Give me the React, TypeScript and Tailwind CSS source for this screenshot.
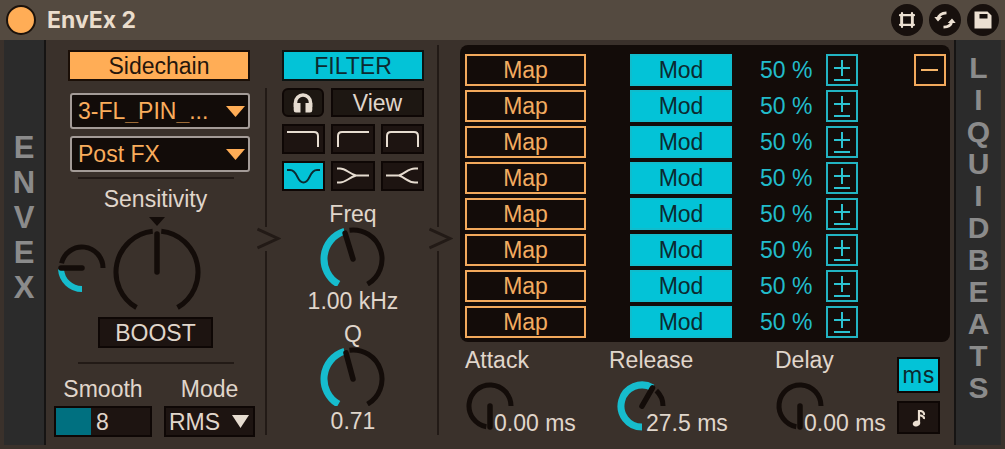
import React, { useState } from "react";

const MAP_ROWS = [1, 2, 3, 4, 5, 6, 7, 8];

interface arcTypes {
  from: number;
  to: number;
  color: string;
  width: number;
}

interface knobTypes {
  label: string;
  width: number;
  height: number;
  cx: number;
  cy: number;
  radius: number;
  needle: number;
  needleLength: number;
  arcs: arcTypes[];
  children?: React.ReactNode;
}

const CYAN = "#16bccd";
const DARK = "#130c09";

// angles are degrees clockwise from 12 o'clock
const point = (cx: number, cy: number, r: number, deg: number) => {
  const a = (deg * Math.PI) / 180;
  return `${cx + r * Math.sin(a)} ${cy - r * Math.cos(a)}`;
};

const Knob = ({ label, width, height, cx, cy, radius, needle, needleLength, arcs, children }: knobTypes) => {
  const [value, setValue] = useState<number>(50);
  return (
    <div className="relative shrink-0">
      <svg width={width} height={height} fill="none" aria-hidden="true">
        {arcs.map((arc) => (
          <path
            key={arc.from}
            d={`M${point(cx, cy, radius, arc.from)} A${radius} ${radius} 0 ${arc.to - arc.from > 180 ? 1 : 0} 1 ${point(cx, cy, radius, arc.to)}`}
            stroke={arc.color}
            strokeWidth={arc.width}
          />
        ))}
        <path
          d={`M${cx} ${cy} L${point(cx, cy, needleLength, needle)}`}
          stroke={DARK}
          strokeWidth="5.5"
          strokeLinecap="round"
        />
        {children}
      </svg>
      <input
        type="range"
        aria-label={label}
        value={value}
        onChange={(e) => setValue(Number(e.target.value))}
        className="absolute inset-0 h-full w-full opacity-0"
      />
    </div>
  );
};

const Divider = ({ className = "" }: { className?: string }) => (
  <div className={`flex w-6 shrink-0 flex-col pb-[10px] ${className}`}>
    <div className="ml-2 w-[2px] grow bg-[#221a16]" />
    <svg width="24" height="24" fill="none" className="shrink-0">
      <path d="M0.500 2 L21 11.500 L0.500 21" stroke="#221a16" strokeWidth="3" />
    </svg>
    <div className="ml-2 h-[184px] w-[2px] shrink-0 bg-[#221a16]" />
  </div>
);

const Rule = ({ className = "" }: { className?: string }) => (
  <div className={`mx-auto h-[2px] w-[156px] bg-[#221a16] ${className}`} />
);

const SourceSelect = ({ label, value }: { label: string; value: string }) => (
  <div className="relative">
    <select
      aria-label={label}
      className="block h-9 w-full appearance-none rounded-[3px] border-2 border-[#a39b97] bg-[#120c09] pl-[6px] text-[#f9ac5c] outline-none"
    >
      <option>{value}</option>
    </select>
    <svg width="19" height="11" className="pointer-events-none absolute top-[13px] right-[5px]">
      <path d="M0 0 H19 L9.500 11 Z" fill="#ffad56" />
    </svg>
  </div>
);

const SHAPES = [
  { name: "Low pass", d: "M5 8 H32 Q36 8 36 12 V23" },
  { name: "High pass", d: "M6 23 V12 Q6 8 10 8 H37" },
  { name: "Band pass", d: "M6 23 V12 Q6 8 10 8 H33 Q37 8 37 12 V23" },
  { name: "Notch", d: "M5 9 H8 C16 9 14.500 21.500 21.500 21.500 S27 9 35 9 H38" },
  { name: "Converge", d: "M5 7.500 H8 C14 7.500 16 12 24 14.500 H37 M5 21.500 H8 C14 21.500 16 17 24 14.500" },
  { name: "Diverge", d: "M37 7.500 H34 C27 7.500 25 12 18 14.500 H5 M37 21.500 H34 C27 21.500 25 17 18 14.500" },
];

const HeaderButton = ({ label, children }: { label: string; children: React.ReactNode }) => (
  <button aria-label={label} className="flex h-8 w-8 items-center justify-center rounded-full bg-[#17100d]">
    {children}
  </button>
);

const MapRow = ({ first }: { first: boolean }) => {
  const [on, setOn] = useState<boolean>(true);
  return (
    <div className="flex h-8 items-center">
      <button className="h-8 w-[121px] border-2 border-[#f2a95c] text-[#f2ab60]">Map</button>
      <button
        onClick={() => setOn(!on)}
        aria-pressed={on}
        className="ml-11 h-8 w-[102px] border-2 border-[#10bccd] bg-[#03c3d7] text-[#0c2a30]"
      >
        Mod
      </button>
      <span className="ml-7 w-[66px] whitespace-nowrap text-[#22bccb]">50 %</span>
      <button aria-label="Bipolar" className="h-8 w-8 border-2 border-[#22b4c2]">
        <svg width="28" height="28" fill="none" stroke="#2cc3d1" strokeWidth="2">
          <path d="M6 12 H22 M14 4 V20 M6 24 H22" />
        </svg>
      </button>
      {first && (
        <button aria-label="Remove" className="ml-auto h-8 w-8 border-2 border-[#f2a95c]">
          <svg width="28" height="28" fill="none" stroke="#f5b468" strokeWidth="2">
            <path d="M5 14 H22" />
          </svg>
        </button>
      )}
    </div>
  );
};

const smallKnob = { width: 50, height: 50, cx: 25, cy: 25, radius: 21, needleLength: 21 };
const filterKnob = { width: 66, height: 60, cx: 33, cy: 33, radius: 29, needleLength: 27 };
const filterArcs: arcTypes[] = [
  { from: 210, to: 343, color: CYAN, width: 7 },
  { from: 353, to: 510, color: DARK, width: 5 },
];
const idleArcs: arcTypes[] = [{ from: 190, to: 450, color: DARK, width: 5 }];

const App = () => {
  const [smooth, setSmooth] = useState<string>("8");
  return (
    <div className="min-h-screen bg-[#3a312b] font-['Liberation_Sans',Arial,sans-serif] text-[23px] leading-6 text-[#e0d6cb]">
      <header className="flex h-10 items-center bg-[#544a40] px-[6px]">
        <button aria-label="Device on" className="h-[30px] w-[30px] rounded-full border-2 border-[#1b120c] bg-[#ffad56]" />
        <h1 className="ml-[11px] font-['Inter',sans-serif] font-bold text-[#eaddcd]">EnvEx 2</h1>
        <div className="ml-auto flex gap-[6px]">
          <HeaderButton label="Hot swap">
            <svg width="18" height="18" fill="none" stroke="#ece0d2" strokeWidth="2.200" strokeLinecap="round">
              <path d="M4 2 V16 M14 2 V16 M2 4.200 H16 M2 13.800 H16" />
              <path d="M3.500 4 V14 M14.500 4 V14" strokeWidth="2.600" />
            </svg>
          </HeaderButton>
          <HeaderButton label="Reload">
            <svg width="22" height="18" fill="none">
              <path d="M12.500 1.800 C8 2 4.800 4 4.200 7.500 M9.500 16.200 C14 16 17.200 14 17.800 10.500" stroke="#ece0d2" strokeWidth="2.800" />
              <path d="M0.300 6 H8.300 L4 10.500 Z M21.700 12 H13.700 L18 7.500 Z" fill="#ece0d2" />
            </svg>
          </HeaderButton>
          <HeaderButton label="Save">
            <svg width="18" height="18">
              <path fillRule="evenodd" d="M0.500 0.500 H13.500 L17.500 4.500 V17.500 H0.500 Z M5.500 3 V7.500 H13.500 V3 Z" fill="#ece0d2" />
            </svg>
          </HeaderButton>
        </div>
      </header>

      <main className="flex px-1 pb-1">
        <aside className="flex w-[42px] shrink-0 flex-col items-center border-r-2 border-[#161413] bg-[#2b2b2b] pt-[90px] text-[31px] leading-[35px] font-bold text-[#8b8b8b]">
          {"ENVEX".split("").map((c, i) => (
            <span key={i}>{c}</span>
          ))}
        </aside>

        <section className="w-[211px] shrink-0 pt-[10px] pb-2 pl-2">
          <div className="pr-[7px] pl-[14px]">
            <button className="block h-[31px] w-full border-2 border-[#1b0f07] bg-[#ffad56] text-[#25160c]">Sidechain</button>
            <div className="mt-3 flex flex-col gap-[7px] pl-[2px]">
              <SourceSelect label="Sidechain source" value="3-FL_PIN_..." />
              <SourceSelect label="Tap point" value="Post FX" />
            </div>
          </div>
          <Rule className="mt-[5px]" />
          <h2 className="mt-2 text-center">Sensitivity</h2>
          <div className="mt-1 flex items-end gap-[5px] pl-[3px]">
            <div className="pb-[18px]">
              <Knob
                {...smallKnob}
                label="Modulation amount"
                needle={270}
                arcs={[
                  { from: 180, to: 267, color: CYAN, width: 6 },
                  { from: 283, to: 450, color: DARK, width: 5 },
                ]}
              />
            </div>
            <Knob
              label="Sensitivity"
              width={90}
              height={96}
              cx={45}
              cy={57}
              radius={41}
              needle={0}
              needleLength={38}
              arcs={[
                { from: 210, to: 354, color: DARK, width: 5 },
                { from: 366, to: 510, color: DARK, width: 5 },
              ]}
            >
              <path d="M37 2 H53 L45 11 Z" fill={DARK} />
            </Knob>
          </div>
          <button className="mx-auto mt-[6px] block h-[31px] w-[115px] border-2 border-[#0e0705] bg-[#1d1411]">BOOST</button>
          <Rule className="mt-[14px]" />
          <div className="mt-[13px] flex gap-3">
            <div className="w-[98px]">
              <label htmlFor="smooth" className="block text-center">Smooth</label>
              <div className="mt-[5px] flex h-[31px] border-2 border-[#0e0705] bg-[#1d1411]">
                <div className="w-[35px] shrink-0 bg-[#007080]" />
                <input
                  id="smooth"
                  value={smooth}
                  onChange={(e) => setSmooth(e.target.value)}
                  className="w-full min-w-0 bg-transparent pl-[5px] outline-none"
                />
              </div>
            </div>
            <div className="w-[91px]">
              <label htmlFor="mode" className="block text-center">Mode</label>
              <div className="relative mt-[5px]">
                <select
                  id="mode"
                  className="block h-[31px] w-full appearance-none border-2 border-[#0e0705] bg-[#1d1411] pl-[3px] outline-none"
                >
                  <option>RMS</option>
                  <option>Peak</option>
                </select>
                <svg width="17" height="13" className="pointer-events-none absolute top-[9px] right-[6px]">
                  <path d="M0 0 H17 L8.500 13 Z" fill="#e6dcd0" />
                </svg>
              </div>
            </div>
          </div>
        </section>

        <Divider className="pt-12" />

        <section className="ml-px w-[142px] shrink-0 pt-[10px]">
          <button className="block h-[31px] w-full border-2 border-[#0c1413] bg-[#03c3d7] text-[#0c2a30]">FILTER</button>
          <div className="mt-[7px] flex gap-[7px]">
            <button
              aria-label="Listen"
              className="flex h-[29px] w-[42px] items-center justify-center rounded-md border-2 border-[#0e0705] bg-[#1d1712]"
            >
              <svg width="20" height="20" fill="none">
                <path d="M2.500 14 V9.500 A7.500 7.500 0 0 1 17.500 9.500 V14" stroke="#e6dcd0" strokeWidth="3.500" />
                <path d="M0.700 10 H7.500 V19.500 H3 Q0.700 19.500 0.700 17 Z M19.300 10 H12.500 V19.500 H17 Q19.300 19.500 19.300 17 Z" fill="#e6dcd0" />
              </svg>
            </button>
            <button className="h-[29px] grow border-2 border-[#0e0705] bg-[#1d1712]">View</button>
          </div>
          <div className="mt-[7px] grid grid-cols-3 gap-x-[6px] gap-y-[7px]">
            {SHAPES.map((shape) => {
              const active = shape.name === "Notch";
              return (
                <button
                  key={shape.name}
                  aria-label={shape.name}
                  aria-pressed={active}
                  className={`flex h-[30px] items-center justify-center border-2 border-[#0e0705] ${active ? "bg-[#03c3d7] text-[#0c2a30]" : "bg-[#1d1411] text-[#e6dcd0]"}`}
                >
                  <svg width="43" height="30" fill="none" className="shrink-0">
                    <path d={shape.d} stroke="currentColor" strokeWidth="2" />
                  </svg>
                </button>
              );
            })}
          </div>
          <div className="mt-[11px] flex flex-col items-center">
            <span>Freq</span>
            <Knob {...filterKnob} label="Freq" needle={343} arcs={filterArcs} />
            <span className="mt-[3px]">1.00 kHz</span>
          </div>
          <div className="mt-[9px] flex flex-col items-center">
            <span>Q</span>
            <Knob {...filterKnob} label="Q" needle={345} arcs={filterArcs} />
            <span className="mt-[3px]">0.71</span>
          </div>
        </section>

        <Divider className="ml-[5px] pt-[5px]" />

        <section className="min-w-0 grow pt-[5px] pr-1 pl-[7px]">
          <div className="flex flex-col gap-1 rounded-lg bg-[#130c09] pt-[9px] pr-1 pb-1 pl-[5px]">
            {MAP_ROWS.map((row) => (
              <MapRow key={row} first={row === 1} />
            ))}
          </div>
          <div className="flex pt-[6px] pr-[10px] pl-[5px]">
            <div className="w-36">
              <h2>Attack</h2>
              <div className="mt-[9px] flex">
                <Knob {...smallKnob} label="Attack" needle={180} arcs={idleArcs} />
                <span className="-ml-[21px] pt-[30px] whitespace-nowrap">0.00 ms</span>
              </div>
            </div>
            <div className="w-[166px]">
              <h2>Release</h2>
              <div className="mt-[9px] flex pl-2">
                <Knob
                  {...smallKnob}
                  label="Release"
                  needle={30}
                  arcs={[
                    { from: 180, to: 390, color: CYAN, width: 7 },
                    { from: 403, to: 450, color: DARK, width: 5 },
                  ]}
                />
                <span className="-ml-[21px] pt-[30px] whitespace-nowrap">27.5 ms</span>
              </div>
            </div>
            <div>
              <h2>Delay</h2>
              <div className="mt-[9px] flex">
                <Knob {...smallKnob} label="Delay" needle={180} arcs={idleArcs} />
                <span className="-ml-[21px] pt-[30px] whitespace-nowrap">0.00 ms</span>
              </div>
            </div>
            <div className="ml-auto flex flex-col gap-2 pt-[9px]">
              <button className="h-9 w-[43px] border-2 border-[#0e0705] bg-[#03c3d7] font-['Inter',sans-serif] text-[#0c2a30]">ms</button>
              <button aria-label="Sync" className="flex h-[33px] w-[43px] items-center justify-center border-2 border-[#0e0705] bg-[#1d1411]">
                <svg width="14" height="18" fill="none">
                  <ellipse cx="4.500" cy="14.500" rx="3.800" ry="2.800" fill="#ece0d2" transform="rotate(-20 4.500 14.500)" />
                  <path d="M7 14 V1" stroke="#ece0d2" strokeWidth="2.200" />
                  <path d="M7 2 H9 Q12.500 3 12 6 M7 6.500 H9 Q12.500 7.500 12 10" stroke="#ece0d2" strokeWidth="2" />
                </svg>
              </button>
            </div>
          </div>
        </section>

        <aside className="flex w-[47px] shrink-0 flex-col items-center border-l-2 border-[#161413] bg-[#2b2b2b] pt-3 text-[30px] leading-8 font-bold text-[#8b8b8b]">
          {"LIQUIDBEATS".split("").map((c, i) => (
            <span key={i}>{c}</span>
          ))}
        </aside>
      </main>
    </div>
  );
};

export default App;
